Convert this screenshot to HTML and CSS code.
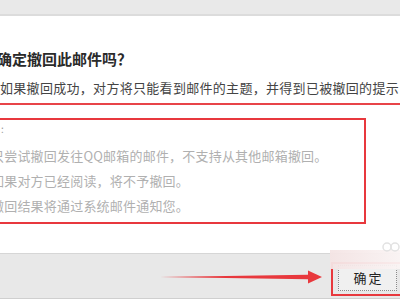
FILE: index.html
```html
<!DOCTYPE html>
<html lang="zh">
<head>
<meta charset="utf-8">
<link rel="stylesheet" href="styles.css">
</head>
<body>
<div class="page">
  <div class="topbar"></div>
  <div class="content">
    <div class="title">确定撤回此邮件吗？</div>
    <div class="desc">如果撤回成功，对方将只能看到邮件的主题，并得到已被撤回的提示</div>
    <div class="notes">
      <div class="colon">:</div>
      <div class="note">只尝试撤回发往QQ邮箱的邮件，不支持从其他邮箱撤回。</div>
      <div class="note">如果对方已经阅读，将不予撤回。</div>
      <div class="note">撤回结果将通过系统邮件通知您。</div>
    </div>
  </div>
  <div class="footer">
    <svg class="arrow" width="162" height="16" viewBox="0 0 162 16">
      <path d="M0 8 L148 5.8 L148 1.5 L162 8 L148 14.5 L148 10.2 Z" fill="#e8383d"/>
    </svg>
    <div class="btnbox">
      <div class="btn">确定</div>
    </div>
  </div>
  <div class="watermark"></div>
  <svg class="wmlogo" width="18" height="12" viewBox="0 0 18 12">
    <circle cx="5" cy="6" r="4" fill="none" stroke="#e2e2e2" stroke-width="1.5"/>
    <circle cx="13" cy="6" r="4" fill="none" stroke="#e2e2e2" stroke-width="1.5"/>
  </svg>
</div>
</body>
</html>
```

FILE: styles.css
```css
html, body {
  margin: 0;
  padding: 0;
  background: #fff;
}
.page {
  position: relative;
  width: 400px;
  height: 300px;
  overflow: hidden;
  font-family: "Noto Sans CJK SC", "Liberation Sans", sans-serif;
}
.topbar {
  height: 14px;
  background: #e9e9e9;
  border-bottom: 2px solid #dcdcdc;
}
.content {
  padding-top: 33px;
  height: 204px;
}
.title {
  margin-left: -3px;
  font-size: 15px;
  line-height: 20px;
  font-weight: bold;
  color: #2a2a2a;
  white-space: nowrap;
}
.desc {
  margin-top: 9px;
  font-size: 13px;
  line-height: 20px;
  letter-spacing: 0.3px;
  color: #444;
  white-space: nowrap;
  padding-bottom: 5px;
  border-bottom: 2px solid #e84448;
}
.notes {
  margin-top: 13px;
  margin-left: -20px;
  width: 382px;
  border: 2px solid #e8383d;
  padding: 2px 0 4px 0;
  color: #b0b0b0;
  font-size: 13px;
}
.colon {
  line-height: 14px;
  font-size: 10px;
  padding-left: 19px;
  margin-bottom: 7px;
  color: #999;
}
.note {
  line-height: 25px;
  letter-spacing: 0.2px;
  white-space: nowrap;
  padding-left: 9px;
}
.footer {
  box-sizing: border-box;
  height: 46px;
  border-top: 1px solid #d6d6d6;
  border-bottom: 1px solid #cfcfcf;
  background: #e8e8e8;
  display: flex;
  align-items: center;
  padding-left: 160px;
  padding-top: 2px;
}
.arrow {
  display: block;
  flex: none;
}
.btnbox {
  flex: none;
  margin-left: 9px;
  width: 65px;
  height: 28px;
  border: 2px solid #e8383d;
  padding: 1px 1px 1px 5px;
  box-sizing: content-box;
  margin-top: 4px;
}
.btn {
  box-sizing: border-box;
  width: 59px;
  height: 26px;
  border: 1px dotted #8a8a8a;
  background: #f0f0f0;
  color: #222;
  font-size: 13px;
  line-height: 24px;
  text-align: center;
  letter-spacing: 2px;
  text-indent: 2px;
}
.watermark {
  position: absolute;
  left: 330px;
  top: 250px;
  width: 70px;
  height: 19px;
  background: linear-gradient(to right, rgba(244, 228, 228, 0.95), rgba(250, 244, 244, 0.95));
}
.wmlogo {
  position: absolute;
  left: 382px;
  top: 241px;
}
```
